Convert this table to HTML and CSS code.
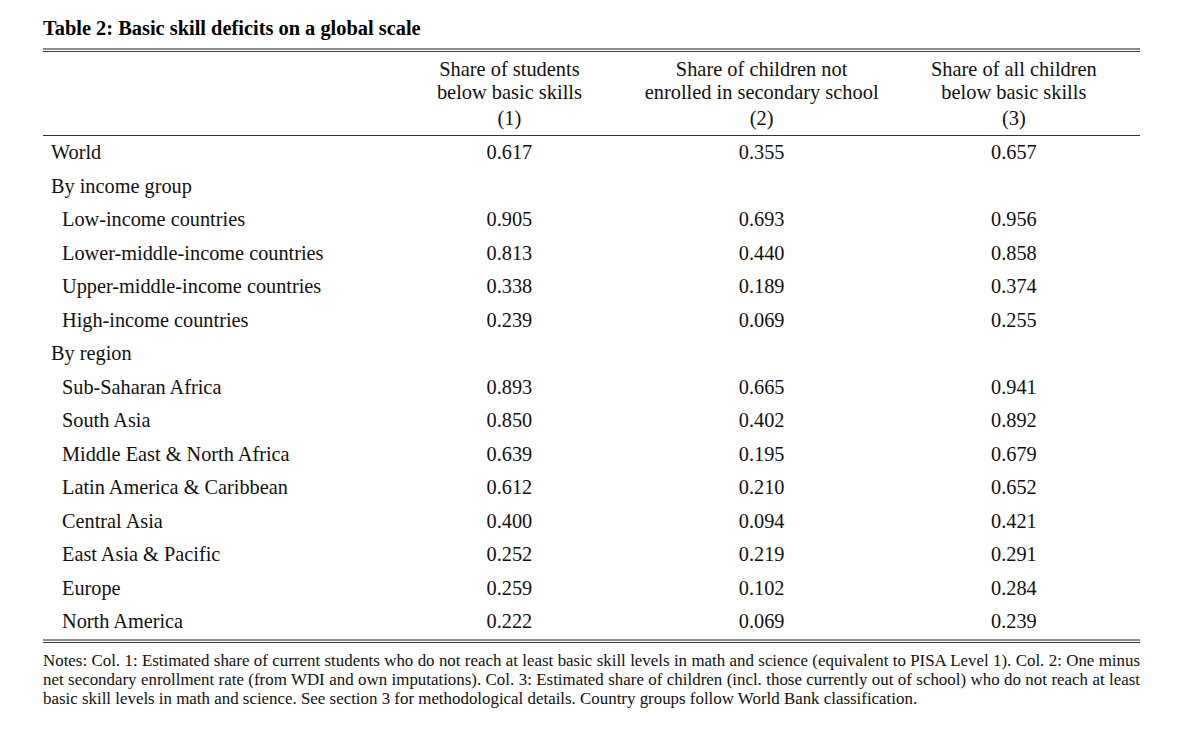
FILE: index.html
```html
<!DOCTYPE html>
<html lang="en">
<head>
<meta charset="utf-8">
<title>Table 2</title>
<link rel="stylesheet" href="styles.css">
</head>
<body>
<div class="page">
  <h1 class="title">Table 2: Basic skill deficits on a global scale</h1>
  <div class="rule-double"></div>
  <table class="tbl">
    <colgroup>
      <col class="c-label">
      <col class="c-num">
      <col class="c-num">
      <col class="c-num">
    </colgroup>
    <thead>
      <tr class="head">
        <th></th>
        <th><div class="h-text">Share of students<br>below basic skills</div><div class="h-num">(1)</div></th>
        <th><div class="h-text">Share of children not<br>enrolled in secondary school</div><div class="h-num">(2)</div></th>
        <th><div class="h-text">Share of all children<br>below basic skills</div><div class="h-num">(3)</div></th>
      </tr>
    </thead>
    <tbody>
      <tr><td class="lbl">World</td><td>0.617</td><td>0.355</td><td>0.657</td></tr>
      <tr><td class="lbl">By income group</td><td></td><td></td><td></td></tr>
      <tr><td class="lbl sub">Low-income countries</td><td>0.905</td><td>0.693</td><td>0.956</td></tr>
      <tr><td class="lbl sub">Lower-middle-income countries</td><td>0.813</td><td>0.440</td><td>0.858</td></tr>
      <tr><td class="lbl sub">Upper-middle-income countries</td><td>0.338</td><td>0.189</td><td>0.374</td></tr>
      <tr><td class="lbl sub">High-income countries</td><td>0.239</td><td>0.069</td><td>0.255</td></tr>
      <tr><td class="lbl">By region</td><td></td><td></td><td></td></tr>
      <tr><td class="lbl sub">Sub-Saharan Africa</td><td>0.893</td><td>0.665</td><td>0.941</td></tr>
      <tr><td class="lbl sub">South Asia</td><td>0.850</td><td>0.402</td><td>0.892</td></tr>
      <tr><td class="lbl sub">Middle East &amp; North Africa</td><td>0.639</td><td>0.195</td><td>0.679</td></tr>
      <tr><td class="lbl sub">Latin America &amp; Caribbean</td><td>0.612</td><td>0.210</td><td>0.652</td></tr>
      <tr><td class="lbl sub">Central Asia</td><td>0.400</td><td>0.094</td><td>0.421</td></tr>
      <tr><td class="lbl sub">East Asia &amp; Pacific</td><td>0.252</td><td>0.219</td><td>0.291</td></tr>
      <tr><td class="lbl sub">Europe</td><td>0.259</td><td>0.102</td><td>0.284</td></tr>
      <tr><td class="lbl sub">North America</td><td>0.222</td><td>0.069</td><td>0.239</td></tr>
    </tbody>
  </table>
  <div class="rule-double"></div>
  <p class="notes">Notes: Col. 1: Estimated share of current students who do not reach at least basic skill levels in math and science (equivalent to PISA Level 1). Col. 2: One minus net secondary enrollment rate (from WDI and own imputations). Col. 3: Estimated share of children (incl. those currently out of school) who do not reach at least basic skill levels in math and science. See section 3 for methodological details. Country groups follow World Bank classification.</p>
</div>
</body>
</html>
```

FILE: styles.css
```css
html, body {
  margin: 0;
  padding: 0;
  background: #ffffff;
}

body {
  font-family: "Liberation Serif", "Times New Roman", serif;
  color: #111111;
}

.page {
  width: 1097px;
  margin-left: 43px;
  padding-top: 17px;
}

.title {
  margin: 0;
  font-size: 20.4px;
  line-height: 22px;
  font-weight: bold;
  color: #000000;
  height: 31px;
}

.rule-double {
  height: 1px;
  border-top: 2px solid #8c8c8c;
  border-bottom: 1px solid #3a3a3a;
}

.tbl {
  width: 1097px;
  border-collapse: collapse;
  table-layout: fixed;
}

.c-label { width: 340px; }
.c-num { width: 252px; }

.head th {
  font-weight: normal;
  font-size: 20.4px;
  text-align: center;
  padding: 6px 0 5px 0;
  border-bottom: 1px solid #333333;
  vertical-align: top;
}

.h-text {
  line-height: 23px;
}

.h-num {
  line-height: 23px;
  margin-top: 3px;
}

.tbl td {
  font-size: 20.3px;
  line-height: 33.5px;
  height: 33.5px;
  padding: 0;
  text-align: center;
  white-space: nowrap;
}

.tbl td.lbl {
  text-align: left;
  padding-left: 8px;
}

.tbl td.sub {
  padding-left: 19px;
}

.notes {
  margin: 8px 0 0 0;
  font-size: 16.9px;
  line-height: 19px;
  text-align: justify;
}
```
